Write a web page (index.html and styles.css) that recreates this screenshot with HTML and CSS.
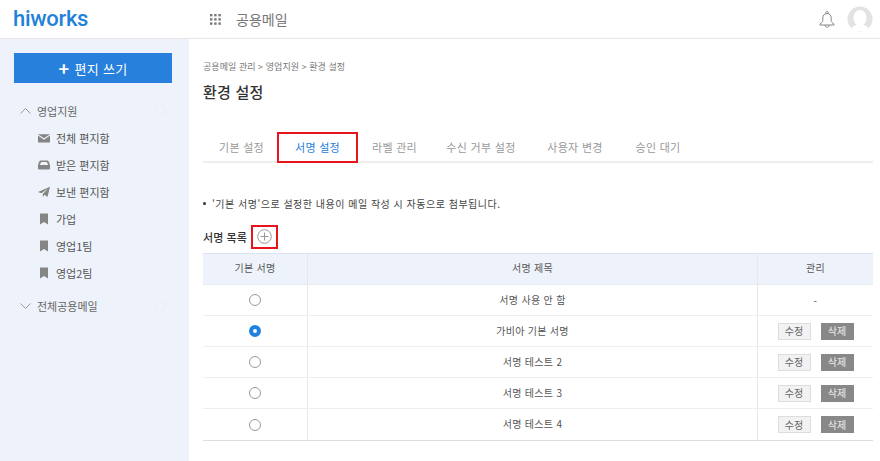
FILE: index.html
```html
<!DOCTYPE html>
<html lang="ko">
  <head>
    <meta charset="UTF-8" />
    <title>환경 설정</title>
    <link rel="stylesheet" href="styles.css">
  </head>
  <body>
    <header class="topbar">
      <div class="logo">hiworks</div>
      <svg class="apps" width="11" height="11" viewBox="0 0 11 11" fill="#777">
        <rect x="0" y="0" width="2.4" height="2.4"/><rect x="4.2" y="0" width="2.4" height="2.4"/><rect x="8.4" y="0" width="2.4" height="2.4"/>
        <rect x="0" y="4.2" width="2.4" height="2.4"/><rect x="4.2" y="4.2" width="2.4" height="2.4"/><rect x="8.4" y="4.2" width="2.4" height="2.4"/>
        <rect x="0" y="8.4" width="2.4" height="2.4"/><rect x="4.2" y="8.4" width="2.4" height="2.4"/><rect x="8.4" y="8.4" width="2.4" height="2.4"/>
      </svg>
      <div class="app-name">공용메일</div>
      <svg class="bell" width="16" height="17" viewBox="0 0 16 17" fill="none" stroke="#888" stroke-width="1">
        <path d="M8 2.500c-2.800 0-4.200 2-4.200 4.500v2.500c0 1.500-1.300 2.300-2.800 3.500v1h14v-1c-1.500-1.200-2.800-2-2.800-3.500V7c0-2.500-1.400-4.500-4.200-4.500z"/>
        <path d="M6.800 2.500V1.500c0-.6.500-1 1.200-1s1.200.4 1.200 1v1"/>
        <path d="M6 14c0 1.400.9 2.300 2 2.300s2-.9 2-2.300"/>
      </svg>
      <svg class="avatar" width="26" height="26" viewBox="0 0 26 26">
        <circle cx="13" cy="13" r="12.500" fill="#e3e3e3"/>
        <ellipse cx="13" cy="12" rx="6.500" ry="8" fill="#fff"/>
        <path d="M4 25c1-5 5-7 9-7s8 2 9 7z" fill="#fff"/>
      </svg>
    </header>

    <div class="layout">
      <aside class="sidebar">
        <button class="compose"><span class="plus">+</span>편지 쓰기</button>

        <div class="group">
          <svg class="chevron" width="11" height="6" viewBox="0 0 11 6" fill="none" stroke="#999"><path d="M.5 5.500l5-5 5 5"/></svg>
          <span>영업지원</span>
          <i class="faint"></i>
        </div>
        <ul class="folders">
          <li>
            <svg width="12" height="12" viewBox="0 0 12 12" fill="#858585"><path d="M0 2.200h12L6 6.300z"/><path d="M0 3.600V10.500h12V3.600L6 7.800z"/></svg>
            전체 편지함
          </li>
          <li>
            <svg width="12" height="12" viewBox="0 0 12 12" fill="#858585"><path d="M3 1.500h6c1 0 1.500.5 2 1.500l1 3v3c0 1-.5 1.500-1.500 1.500h-9C.5 10.500 0 10 0 9V6l1-3c.5-1 1-1.500 2-1.500zM3.200 3L1.800 6h8.400L8.800 3z"/></svg>
            받은 편지함
          </li>
          <li>
            <svg width="12" height="12" viewBox="0 0 12 12" fill="#858585"><path d="M12 .8L9.500 11 6.500 8.800 4.800 11V8L10 2.500 3.500 7.300 0 6z"/></svg>
            보낸 편지함
          </li>
          <li>
            <svg width="12" height="12" viewBox="0 0 12 12" fill="#858585"><path d="M2 .5h8v11L6 9l-4 2.500z"/></svg>
            가업
          </li>
          <li>
            <svg width="12" height="12" viewBox="0 0 12 12" fill="#858585"><path d="M2 .5h8v11L6 9l-4 2.500z"/></svg>
            영업1팀
          </li>
          <li>
            <svg width="12" height="12" viewBox="0 0 12 12" fill="#858585"><path d="M2 .5h8v11L6 9l-4 2.500z"/></svg>
            영업2팀
          </li>
        </ul>
        <div class="group group-last">
          <svg class="chevron" width="11" height="6" viewBox="0 0 11 6" fill="none" stroke="#999"><path d="M.5 .5l5 5 5-5"/></svg>
          <span>전체공용메일</span>
          <i class="faint"></i>
        </div>
      </aside>

      <main class="content">
        <div class="breadcrumb">공용메일 관리 &gt; 영업지원 &gt; 환경 설정</div>
        <h1 class="title">환경 설정</h1>

        <nav class="tabs">
          <a class="tab tab-1">기본 설정</a>
          <a class="tab tab-2 active">서명 설정</a>
          <a class="tab tab-3">라벨 관리</a>
          <a class="tab tab-4">수신 거부 설정</a>
          <a class="tab tab-5">사용자 변경</a>
          <a class="tab tab-6">승인 대기</a>
        </nav>

        <p class="notice"><span class="dot"></span>'기본 서명'으로 설정한 내용이 메일 작성 시 자동으로 첨부됩니다.</p>

        <div class="list-head">
          <span>서명 목록</span>
          <span class="add-box">
            <svg width="15" height="15" viewBox="0 0 15 15" fill="none" stroke="#999"><circle cx="7.500" cy="7.500" r="6.800"/><path d="M7.500 3.500v8M3.500 7.500h8"/></svg>
          </span>
        </div>

        <div class="table">
          <div class="row head">
            <div class="cell c1">기본 서명</div>
            <div class="cell c2">서명 제목</div>
            <div class="cell c3">관리</div>
          </div>
          <div class="row">
            <div class="cell c1"><span class="radio"></span></div>
            <div class="cell c2">서명 사용 안 함</div>
            <div class="cell c3">-</div>
          </div>
          <div class="row">
            <div class="cell c1"><span class="radio on"></span></div>
            <div class="cell c2">가비아 기본 서명</div>
            <div class="cell c3"><button class="btn">수정</button><button class="btn del">삭제</button></div>
          </div>
          <div class="row">
            <div class="cell c1"><span class="radio"></span></div>
            <div class="cell c2">서명 테스트 2</div>
            <div class="cell c3"><button class="btn">수정</button><button class="btn del">삭제</button></div>
          </div>
          <div class="row">
            <div class="cell c1"><span class="radio"></span></div>
            <div class="cell c2">서명 테스트 3</div>
            <div class="cell c3"><button class="btn">수정</button><button class="btn del">삭제</button></div>
          </div>
          <div class="row">
            <div class="cell c1"><span class="radio"></span></div>
            <div class="cell c2">서명 테스트 4</div>
            <div class="cell c3"><button class="btn">수정</button><button class="btn del">삭제</button></div>
          </div>
        </div>
      </main>
    </div>
  </body>
</html>
```

FILE: styles.css
```css
* {
  margin: 0;
  padding: 0;
  box-sizing: border-box;
}

body,
html {
  height: 100%;
  overflow: hidden;
  background-color: #fff;
  color: #444;
  font-family: "Noto Sans CJK KR", "Noto Sans", sans-serif;
  font-size: 10px;
}

.topbar {
  display: flex;
  align-items: center;
  height: 39px;
  padding-left: 13px;
  border-bottom: 1px solid #e6e6e6;
}

.logo {
  width: 197px;
  padding-bottom: 2px;
  font-family: "Roboto", sans-serif;
  font-size: 22px;
  font-weight: 500;
  letter-spacing: -0.3px;
  color: #1f82d8;
}

.apps {
  margin-right: 15px;
}

.app-name {
  font-size: 14px;
  color: #777;
}

.bell {
  margin-left: auto;
  margin-right: 12px;
}

.avatar {
  margin-right: 7px;
}

.layout {
  display: flex;
  height: 422px;
}

.sidebar {
  width: 189px;
  padding: 14px 17px 0 14px;
  background-color: #eef3fb;
}

.compose {
  display: flex;
  align-items: center;
  justify-content: center;
  width: 158px;
  height: 30px;
  margin-bottom: 14px;
  border: 0;
  background-color: #2680dc;
  color: #fff;
  font-family: inherit;
  font-size: 13px;
  letter-spacing: 0.3px;
}

.plus {
  margin-right: 5px;
  font-size: 18px;
  font-weight: 700;
  line-height: 18px;
}

.group {
  display: flex;
  align-items: center;
  gap: 6px;
  height: 27px;
  padding-left: 6px;
  font-size: 11px;
  color: #666;
}

.group-last {
  margin-top: 6px;
}

.faint {
  width: 11px;
  height: 11px;
  margin-left: auto;
  margin-right: 6px;
  border: 1px solid #e8edf6;
  border-radius: 50%;
}

.folders {
  list-style: none;
}

.folders li {
  display: flex;
  align-items: center;
  gap: 6px;
  height: 27px;
  padding-left: 24px;
  font-size: 11px;
  color: #555;
}

.content {
  flex: 1;
  padding: 21px 7px 0 14px;
}

.breadcrumb {
  height: 14px;
  line-height: 14px;
  font-size: 9px;
  letter-spacing: 0.05px;
  color: #777;
}

.title {
  margin-top: 6px;
  height: 24px;
  line-height: 24px;
  font-size: 15px;
  font-weight: 500;
  letter-spacing: 0.2px;
  color: #333;
}

.tabs {
  display: flex;
  height: 31px;
  margin-top: 28px;
  border-bottom: 2px solid #eee;
  font-size: 11px;
  letter-spacing: 0.3px;
  color: #999;
}

.tab {
  display: flex;
  align-items: center;
  justify-content: center;
  height: 31px;
  padding-bottom: 2px;
}

.tab-1 { width: 74px; padding-left: 3px; }
.tab-2 { width: 81px; }
.tab-3 { width: 73px; }
.tab-4 { width: 100px; }
.tab-5 { width: 80px; margin-left: 4px; }
.tab-6 { width: 80px; margin-left: 3px; }

.tab.active {
  border: 2px solid #e8141c;
  color: #2680dc;
}

.notice {
  display: flex;
  align-items: center;
  height: 14px;
  margin-top: 33px;
  font-size: 10px;
  letter-spacing: 0.5px;
  color: #444;
}

.dot {
  width: 3px;
  height: 3px;
  margin-right: 6px;
  border-radius: 50%;
  background-color: #333;
}

.list-head {
  display: flex;
  align-items: center;
  gap: 4px;
  height: 26px;
  margin-top: 14px;
  font-size: 11px;
  font-weight: 500;
  letter-spacing: 0.1px;
  color: #333;
}

.add-box {
  display: flex;
  align-items: center;
  justify-content: center;
  width: 27px;
  height: 24px;
  padding: 0 1px 1px 0;
  border: 2px solid #e8141c;
}

.table {
  margin-top: 3px;
  border-top: 1px solid #dde3ee;
  border-bottom: 1px solid #ddd;
}

.row {
  display: flex;
  height: 31px;
  border-bottom: 1px solid #eee;
}

.row:last-child {
  border-bottom: 0;
}

.row.head {
  height: 31px;
  background-color: #eef3fb;
  border-bottom: 1px solid #e6ebf3;
}

.row.head .cell {
  padding-bottom: 3px;
}

.cell {
  display: flex;
  align-items: center;
  justify-content: center;
  font-size: 10px;
  letter-spacing: 0.3px;
  color: #555;
}

.c1 {
  width: 105px;
  border-right: 1px solid #e8e8e8;
}

.c2 {
  width: 450px;
  padding-bottom: 2px;
  border-right: 1px solid #e8e8e8;
}

.c3 {
  flex: 1;
  gap: 10px;
}

.radio {
  width: 12px;
  height: 12px;
  border: 1px solid #999;
  border-radius: 50%;
  background-color: #fff;
}

.radio.on {
  border: 4px solid #1f82e0;
}

.btn {
  width: 33px;
  height: 17px;
  border: 1px solid #ddd;
  background-color: #f2f2f2;
  color: #666;
  font-family: inherit;
  font-size: 10px;
  line-height: 14px;
}

.btn.del {
  border-color: #888;
  background-color: #888;
  color: #eee;
}
```
